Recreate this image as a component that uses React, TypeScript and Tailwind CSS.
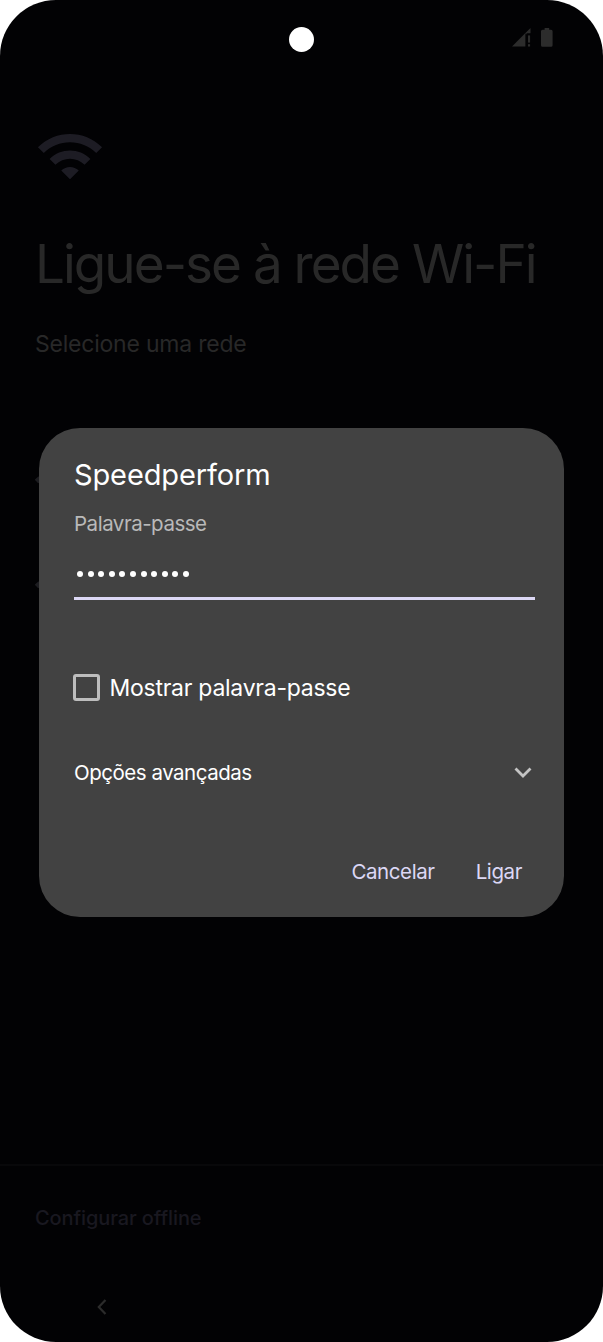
import { clsx } from "clsx";

const networks = ["network-1", "network-2"];
const passwordLength = 11;

function WifiIcon({ className }: { className?: string }) {
    return (
        <svg viewBox="0 0 24 24" fill="currentColor" className={clsx("shrink-0", className)}>
            <path d="M1 9l2 2c4.97-4.97 13.03-4.97 18 0l2-2C16.93 2.93 7.08 2.93 1 9zm8 8l3 3 3-3c-1.65-1.66-4.34-1.66-6 0zm-4-4l2 2c2.76-2.76 7.24-2.76 10 0l2-2C15.14 9.14 8.87 9.14 5 13z" />
        </svg>
    );
}

function StatusIcons() {
    return (
        <div className="flex items-start gap-[10px] text-[#2c2c2c]">
            <svg width="19" height="19" viewBox="0 0 19 19" fill="currentColor">
                <path d="M0 18.5L13.4 5.1V18.5Z" />
                <path d="M13.4 5.1L18.5 0V5.2H14.6V6.2H13.4Z" />
                <rect x="16" y="7.4" width="2.1" height="7.2" />
                <rect x="16" y="16.2" width="2.1" height="2.3" />
            </svg>
            <svg width="12" height="19" viewBox="0 0 12 19" fill="currentColor">
                <path d="M3.6 0h4.6v1.8h1.9a1.5 1.5 0 0 1 1.5 1.5v14a1.5 1.5 0 0 1-1.5 1.5H1.5A1.5 1.5 0 0 1 0 17.3V3.3a1.5 1.5 0 0 1 1.5-1.5h2.1z" />
            </svg>
        </div>
    );
}

function PasswordDialog() {
    return (
        <div
            role="dialog"
            className="absolute left-[39px] top-[428px] flex h-[489px] w-[525px] flex-col rounded-[41px] bg-[#424242] pl-[35px] pr-[29px] pt-[29px] text-white"
        >
            <h2 className="h-9 whitespace-nowrap text-[29px] leading-9 tracking-[-0.12px]">Speedperform</h2>
            <label className="mt-[17px] h-7 whitespace-nowrap text-[20.5px] leading-7 tracking-[-0.48px] text-[#b9b9b9]">
                Palavra-passe
            </label>

            {/* Masked password */}
            <div className="mt-[33px] flex h-[29px] gap-[4.6px] border-b-3 border-[#dcd8f5] pl-[3px]">
                {Array.from({ length: passwordLength }).map((_, i) => (
                    <span key={i} className="h-[6px] w-[6px] rounded-full bg-white" />
                ))}
            </div>

            <div className="-ml-[1px] mt-[71px] flex h-8 items-center gap-[9.5px]">
                <span className="h-[27px] w-[27px] rounded-[3px] border-3 border-[#bdbdbd]" />
                <span className="whitespace-nowrap pt-0.5 text-[23px] leading-8 tracking-[-0.26px]">Mostrar palavra-passe</span>
            </div>

            <div className="mt-14 flex h-7 items-center justify-between">
                <span className="whitespace-nowrap text-[20.5px] leading-7 tracking-[-0.48px]">Opções avançadas</span>
                <svg width="18" height="12" viewBox="0 0 18 12" fill="none" stroke="#c4c4c4" strokeWidth="2.8" className="mr-[3px]">
                    <path d="M1.5 1.5L9 9L16.5 1.5" />
                </svg>
            </div>

            <div className="mt-[71px] flex h-7 justify-end gap-[41px] pr-[13px] text-[20.5px] leading-7 tracking-[-0.4px] text-[#dcd8f5]">
                <button className="whitespace-nowrap">Cancelar</button>
                <button className="whitespace-nowrap">Ligar</button>
            </div>
        </div>
    );
}

export default function App() {
    return (
        <div className="h-[1342px] w-[603px] bg-white font-['Inter',sans-serif]">
            <div className="relative flex h-full w-full flex-col overflow-hidden rounded-[56px] bg-[#020204]">
                {/* Status bar */}
                <div className="flex h-[121px] justify-end pr-[50px] pt-[28px]">
                    <StatusIcons />
                </div>
                <div className="absolute left-[289px] top-[27px] h-[25px] w-[25px] rounded-full bg-white" />

                {/* Wi-Fi setup page */}
                <main className="flex flex-1 flex-col pl-[35px] text-[#282828]">
                    <WifiIcon className="h-[70px] w-[70px] text-[#1d1c24]" />
                    <h1 className="mt-[37px] h-[72px] whitespace-nowrap text-[53px] leading-[72px] tracking-[-1.98px]">
                        Ligue-se à rede Wi-Fi
                    </h1>
                    <p className="mt-7 h-8 whitespace-nowrap text-[23px] leading-8 tracking-[-0.22px]">Selecione uma rede</p>
                    <div className="mt-[104px] flex flex-col gap-[63px] text-[#1c1c20]">
                        {networks.map((n) => (
                            <WifiIcon key={n} className="-ml-[2px] h-[42px] w-[42px]" />
                        ))}
                    </div>
                </main>

                {/* Bottom action + navigation */}
                <footer className="h-[178px] border-t-2 border-[#08080a] pl-[35px] pt-[38px]">
                    <button className="block h-7 whitespace-nowrap text-[20px] font-medium leading-7 tracking-[-0.1px] text-[#191820]">
                        Configurar offline
                    </button>
                    <svg width="10" height="16" viewBox="0 0 10 16" fill="none" stroke="#2b2b2b" strokeWidth="2.2" className="ml-[62px] mt-[67px]">
                        <path d="M8.5 1L1.8 8L8.5 15" />
                    </svg>
                </footer>

                <PasswordDialog />
            </div>
        </div>
    );
}
